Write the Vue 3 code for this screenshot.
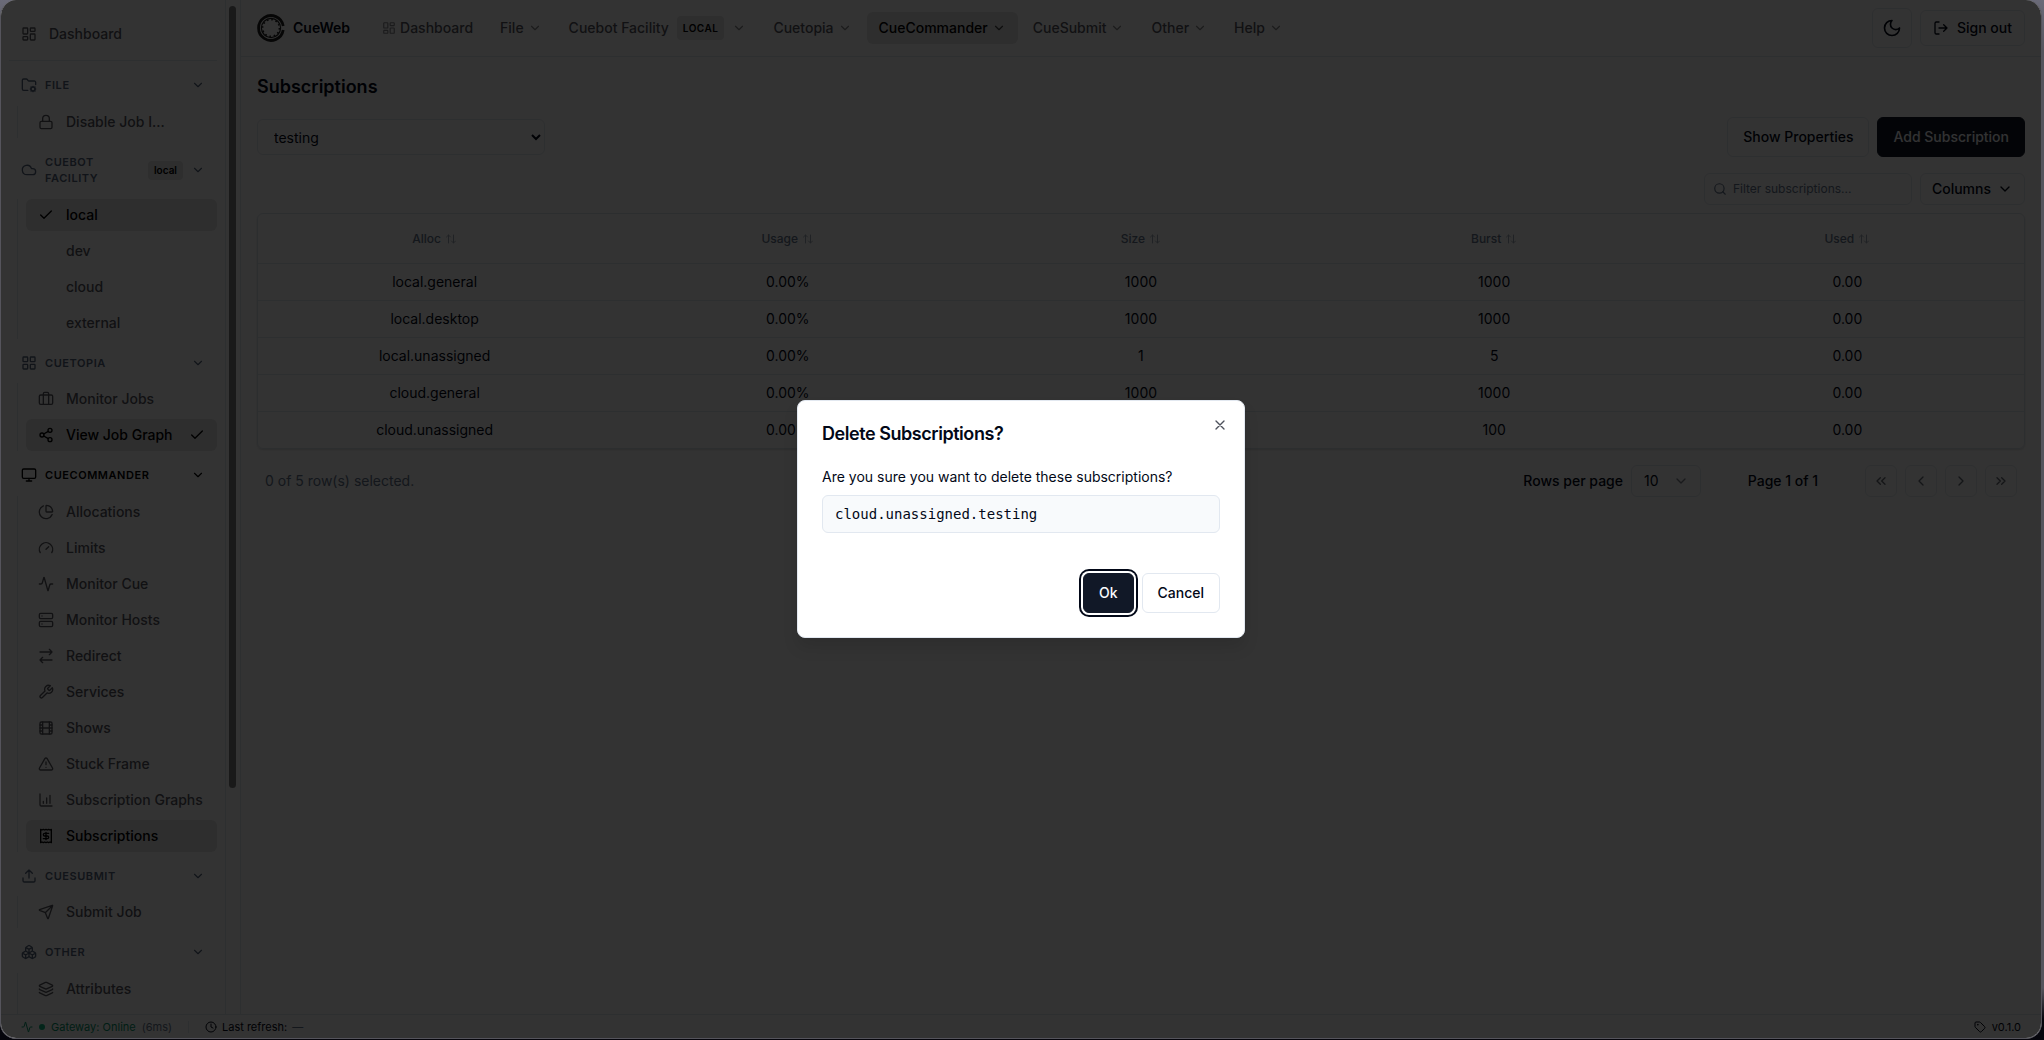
<script setup>
import { ref, computed, h } from "vue";

const icons = {
  dashboard: '<rect width="7" height="9" x="3" y="3" rx="1"/><rect width="7" height="5" x="14" y="3" rx="1"/><rect width="7" height="9" x="14" y="12" rx="1"/><rect width="7" height="5" x="3" y="16" rx="1"/>',
  grid: '<rect width="7" height="7" x="3" y="3" rx="1"/><rect width="7" height="7" x="14" y="3" rx="1"/><rect width="7" height="7" x="14" y="14" rx="1"/><rect width="7" height="7" x="3" y="14" rx="1"/>',
  folder: '<circle cx="18" cy="18" r="3"/><path d="M10.3 20H4a2 2 0 0 1-2-2V5a2 2 0 0 1 2-2h3.9a2 2 0 0 1 1.69.9l.81 1.2a2 2 0 0 0 1.67.9H20a2 2 0 0 1 2 2v3.3"/><path d="M18 14v1M18 21v1M22 18h-1M15 18h-1M21 15l-.9.9M15.9 20.1l-.9.9M21 21l-.9-.9M15.9 15.9 15 15"/>',
  lock: '<rect width="18" height="11" x="3" y="11" rx="2"/><path d="M7 11V7a5 5 0 0 1 10 0v4"/>',
  cloud: '<path d="M17.5 19H9a7 7 0 1 1 6.71-9h1.79a4.5 4.5 0 1 1 0 9Z"/>',
  check: '<path d="M20 6 9 17l-5-5"/>',
  briefcase: '<path d="M16 20V4a2 2 0 0 0-2-2h-4a2 2 0 0 0-2 2v16"/><rect width="20" height="14" x="2" y="6" rx="2"/>',
  share: '<circle cx="18" cy="5" r="3"/><circle cx="6" cy="12" r="3"/><circle cx="18" cy="19" r="3"/><path d="m8.59 13.51 6.83 3.98M15.41 6.51l-6.82 3.98"/>',
  monitor: '<rect width="20" height="14" x="2" y="3" rx="2"/><path d="M8 21h8M12 17v4"/>',
  pie: '<path d="M21 12c.552 0 1.005-.449.95-.998a10 10 0 0 0-8.953-8.951c-.55-.055-.998.398-.998.95v8a1 1 0 0 0 1 1z"/><path d="M21.21 15.89A10 10 0 1 1 8 2.83"/>',
  gauge: '<path d="m12 14 4-4"/><path d="M3.34 19a10 10 0 1 1 17.32 0"/>',
  activity: '<path d="M22 12h-2.48a2 2 0 0 0-1.93 1.46l-2.35 8.36a.25.25 0 0 1-.48 0L9.24 2.18a.25.25 0 0 0-.48 0l-2.35 8.36A2 2 0 0 1 4.49 12H2"/>',
  server: '<rect width="20" height="8" x="2" y="2" rx="2"/><rect width="20" height="8" x="2" y="14" rx="2"/><path d="M6 6h.01M6 18h.01"/>',
  redirect: '<path d="m17 2 4 4-4 4M3 6h18M7 22l-4-4 4-4M21 18H3"/>',
  wrench: '<path d="M14.7 6.3a1 1 0 0 0 0 1.4l1.6 1.6a1 1 0 0 0 1.4 0l3.77-3.77a6 6 0 0 1-7.94 7.94l-6.91 6.91a2.12 2.12 0 0 1-3-3l6.91-6.91a6 6 0 0 1 7.94-7.94l-3.76 3.76z"/>',
  film: '<rect width="18" height="18" x="3" y="3" rx="2"/><path d="M7 3v18M3 7.5h4M3 12h18M3 16.5h4M17 3v18M17 7.5h4M17 16.5h4"/>',
  alert: '<path d="m21.73 18-8-14a2 2 0 0 0-3.48 0l-8 14A2 2 0 0 0 4 21h16a2 2 0 0 0 1.73-3M12 9v4M12 17h.01"/>',
  chart: '<path d="M3 3v16a2 2 0 0 0 2 2h16M13 17V9M18 17V5M8 17v-3"/>',
  receipt: '<path d="M4 2v20l2-1 2 1 2-1 2 1 2-1 2 1 2-1 2 1V2l-2 1-2-1-2 1-2-1-2 1-2-1-2 1Z"/><path d="M16 8h-6a2 2 0 1 0 0 4h4a2 2 0 1 1 0 4H8M12 17.5v-11"/>',
  upload: '<path d="M12 3v12M17 8l-5-5-5 5M21 15v4a2 2 0 0 1-2 2H5a2 2 0 0 1-2-2v-4"/>',
  send: '<path d="M14.536 21.686a.5.5 0 0 0 .937-.024l6.5-19a.496.496 0 0 0-.635-.635l-19 6.5a.5.5 0 0 0-.024.937l7.93 3.18a2 2 0 0 1 1.112 1.11zM21.854 2.147l-10.94 10.939"/>',
  boxes: '<path d="M2.97 12.92A2 2 0 0 0 2 14.63v3.24a2 2 0 0 0 .97 1.71l3 1.8a2 2 0 0 0 2.06 0L12 19v-5.5l-5-3-4.03 2.42ZM7 16.5l-4.74-2.85M7 16.5l5-3M7 16.5v5.17M12 13.5V19l3.97 2.38a2 2 0 0 0 2.06 0l3-1.8a2 2 0 0 0 .97-1.71v-3.24a2 2 0 0 0-.97-1.71L17 10.5l-5 3ZM17 16.5l-5-3M17 16.5l4.74-2.85M17 16.5v5.17M7.97 4.42A2 2 0 0 0 7 6.13v4.37l5 3 5-3V6.13a2 2 0 0 0-.97-1.71l-3-1.8a2 2 0 0 0-2.06 0l-3 1.8ZM12 8 7.26 5.15M12 8l4.74-2.85M12 13.5V8"/>',
  layers: '<path d="M12.83 2.18a2 2 0 0 0-1.66 0L2.6 6.08a1 1 0 0 0 0 1.83l8.58 3.91a2 2 0 0 0 1.66 0l8.58-3.9a1 1 0 0 0 0-1.83zM2 12a1 1 0 0 0 .58.91l8.6 3.91a2 2 0 0 0 1.65 0l8.58-3.9A1 1 0 0 0 22 12M2 17a1 1 0 0 0 .58.91l8.6 3.91a2 2 0 0 0 1.65 0l8.58-3.9A1 1 0 0 0 22 17"/>',
  down: '<path d="m6 9 6 6 6-6"/>',
  left: '<path d="m15 18-6-6 6-6"/>',
  right: '<path d="m9 18 6-6-6-6"/>',
  first: '<path d="m11 17-5-5 5-5M18 17l-5-5 5-5"/>',
  last: '<path d="m6 17 5-5-5-5M13 17l5-5-5-5"/>',
  moon: '<path d="M12 3a6 6 0 0 0 9 9 9 9 0 1 1-9-9Z"/>',
  logout: '<path d="M9 21H5a2 2 0 0 1-2-2V5a2 2 0 0 1 2-2h4M16 17l5-5-5-5M21 12H9"/>',
  search: '<circle cx="11" cy="11" r="8"/><path d="m21 21-4.3-4.3"/>',
  sort: '<path d="m3 8 4-4 4 4M7 4v16M21 16l-4 4-4-4M17 20V4"/>',
  clock: '<circle cx="12" cy="12" r="10"/><path d="M12 6v6l4 2"/>',
  tag: '<path d="M12.586 2.586A2 2 0 0 0 11.172 2H4a2 2 0 0 0-2 2v7.172a2 2 0 0 0 .586 1.414l8.704 8.704a2.426 2.426 0 0 0 3.42 0l6.58-6.58a2.426 2.426 0 0 0 0-3.42z"/><circle cx="7.5" cy="7.5" r=".5" fill="currentColor"/>',
  close: '<path d="M18 6 6 18M6 6l12 12"/>',
};

const Icon = (props) =>
  h("svg", {
    width: props.size || 16,
    height: props.size || 16,
    viewBox: "0 0 24 24",
    fill: "none",
    stroke: "currentColor",
    "stroke-width": 2,
    "stroke-linecap": "round",
    "stroke-linejoin": "round",
    "aria-hidden": "true",
    class: "icon",
    innerHTML: icons[props.name],
  });
Icon.props = ["name", "size"];

const groups = ref([
  { title: "File", icon: "folder", items: [{ label: "Disable Job I...", icon: "lock" }] },
  {
    title: "Cuebot Facility",
    icon: "cloud",
    badge: "local",
    items: [{ label: "local", icon: "check", active: true }, { label: "dev" }, { label: "cloud" }, { label: "external" }],
  },
  {
    title: "Cuetopia",
    icon: "grid",
    items: [
      { label: "Monitor Jobs", icon: "briefcase" },
      { label: "View Job Graph", icon: "share", active: true, checked: true },
    ],
  },
  {
    title: "CueCommander",
    icon: "monitor",
    current: true,
    items: [
      { label: "Allocations", icon: "pie" },
      { label: "Limits", icon: "gauge" },
      { label: "Monitor Cue", icon: "activity" },
      { label: "Monitor Hosts", icon: "server" },
      { label: "Redirect", icon: "redirect" },
      { label: "Services", icon: "wrench" },
      { label: "Shows", icon: "film" },
      { label: "Stuck Frame", icon: "alert" },
      { label: "Subscription Graphs", icon: "chart" },
      { label: "Subscriptions", icon: "receipt", active: true },
    ],
  },
  { title: "CueSubmit", icon: "upload", items: [{ label: "Submit Job", icon: "send" }] },
  { title: "Other", icon: "boxes", items: [{ label: "Attributes", icon: "layers" }] },
]);

const menus = [
  { label: "File" },
  { label: "Cuebot Facility", badge: "LOCAL" },
  { label: "Cuetopia" },
  { label: "CueCommander", active: true },
  { label: "CueSubmit" },
  { label: "Other" },
  { label: "Help" },
];

const columns = ["Alloc", "Usage", "Size", "Burst", "Used"];
const rows = [
  ["local.general", "0.00%", "1000", "1000", "0.00"],
  ["local.desktop", "0.00%", "1000", "1000", "0.00"],
  ["local.unassigned", "0.00%", "1", "5", "0.00"],
  ["cloud.general", "0.00%", "1000", "1000", "0.00"],
  ["cloud.unassigned", "0.00%", "100", "100", "0.00"],
];

const show = ref("testing");
const pageSize = ref("10");
const filter = ref("");
const dialogOpen = ref(true);

const visibleRows = computed(() => rows.filter((r) => r[0].includes(filter.value)));

const closeDialog = () => {
  dialogOpen.value = false;
};
</script>

<template>
  <div class="desktop">
    <div class="window">
      <div class="body">
        <aside class="sidebar">
          <nav class="side-nav">
            <a href="#" class="side-link home"><Icon name="dashboard" /><span>Dashboard</span></a>
            <section v-for="g in groups" :key="g.title" class="group">
              <button class="group-head" :class="{ current: g.current }">
                <Icon :name="g.icon" />
                <span class="group-title">{{ g.title }}</span>
                <span v-if="g.badge" class="side-badge">{{ g.badge }}</span>
                <Icon name="down" :size="14" />
              </button>
              <div class="group-items">
                <a v-for="item in g.items" :key="item.label" href="#" class="side-link" :class="{ active: item.active }">
                  <Icon :name="item.icon" />
                  <span class="side-label">{{ item.label }}</span>
                  <Icon v-if="item.checked" name="check" />
                </a>
              </div>
            </section>
          </nav>
          <div class="scroll-track"><div class="scroll-thumb"></div></div>
        </aside>

        <div class="content">
          <header class="topbar">
            <a href="#" class="brand">
              <svg class="logo" width="28" height="28" viewBox="0 0 28 28" fill="none" stroke="currentColor" aria-hidden="true">
                <path d="M26.200 12A12.400 12.400 0 1 0 26.200 16" stroke-width="2.800" />
                <circle cx="14" cy="14" r="9.600" stroke-width="1.200" />
                <circle cx="14" cy="14" r="8.400" stroke-width="1.600" stroke-dasharray="1.600 2.798" />
              </svg>
              <span>CueWeb</span>
            </a>
            <nav class="menus">
              <a href="#" class="menu"><Icon name="dashboard" :size="14" />Dashboard</a>
              <button v-for="m in menus" :key="m.label" class="menu" :class="{ active: m.active, wide: m.badge }">
                {{ m.label }}
                <span v-if="m.badge" class="menu-badge">{{ m.badge }}</span>
                <Icon name="down" :size="14" />
              </button>
            </nav>
            <div class="top-actions">
              <button class="btn square" aria-label="Toggle theme"><Icon name="moon" :size="20" /></button>
              <button class="btn signout"><Icon name="logout" />Sign out</button>
            </div>
          </header>

          <main class="main">
            <h1>Subscriptions</h1>
            <div class="toolbar">
              <select v-model="show" class="show-select" aria-label="Show">
                <option>testing</option>
              </select>
              <div class="buttons">
                <button class="btn">Show Properties</button>
                <button class="btn primary">Add Subscription</button>
              </div>
            </div>
            <div class="filters">
              <label class="filter">
                <Icon name="search" :size="14" />
                <input v-model="filter" type="text" placeholder="Filter subscriptions..." aria-label="Filter subscriptions" />
              </label>
              <button class="btn columns">Columns<Icon name="down" /></button>
            </div>

            <div class="table-box">
              <table>
                <thead>
                  <tr>
                    <th v-for="c in columns" :key="c">
                      <button class="sort">{{ c }}<Icon name="sort" :size="12" /></button>
                    </th>
                  </tr>
                </thead>
                <tbody>
                  <tr v-for="row in visibleRows" :key="row[0]">
                    <td v-for="(cell, i) in row" :key="i">{{ cell }}</td>
                  </tr>
                </tbody>
              </table>
            </div>

            <div class="pager">
              <p class="selected">0 of 5 row(s) selected.</p>
              <div class="page-size">
                <label for="page-size">Rows per page</label>
                <div class="select-wrap">
                  <select id="page-size" v-model="pageSize">
                    <option>10</option>
                    <option>20</option>
                    <option>50</option>
                  </select>
                  <Icon name="down" />
                </div>
              </div>
              <span class="page-count">Page 1 of 1</span>
              <div class="page-buttons">
                <button disabled aria-label="First page"><Icon name="first" /></button>
                <button disabled aria-label="Previous page"><Icon name="left" /></button>
                <button disabled aria-label="Next page"><Icon name="right" /></button>
                <button disabled aria-label="Last page"><Icon name="last" /></button>
              </div>
            </div>
          </main>
        </div>
      </div>

      <footer class="status">
        <span class="gateway"><Icon name="activity" :size="12" /><i class="dot"></i>Gateway: Online</span>
        <span class="latency">(6ms)</span>
        <span class="divider"></span>
        <span class="refresh"><Icon name="clock" :size="12" />Last refresh: <span class="dash">—</span></span>
        <span class="version"><Icon name="tag" :size="12" />v0.1.0</span>
      </footer>

      <div v-if="dialogOpen" class="overlay">
        <div class="dialog" role="dialog" aria-modal="true" aria-labelledby="dialog-title">
          <h2 id="dialog-title">Delete Subscriptions?</h2>
          <p>Are you sure you want to delete these subscriptions?</p>
          <div class="names">cloud.unassigned.testing</div>
          <div class="dialog-actions">
            <button class="btn primary focused" @click="closeDialog">Ok</button>
            <button class="btn" @click="closeDialog">Cancel</button>
          </div>
          <button class="close" aria-label="Close" @click="closeDialog"><Icon name="close" /></button>
        </div>
      </div>
    </div>
  </div>
</template>

<style>
body {
  background: #08080f;
}
</style>

<style scoped>
* {
  box-sizing: border-box;
}

.desktop {
  height: 100vh;
  padding: 0 2px 1px 0;
  background: linear-gradient(to bottom, #6a6a78, #55545c 5%, #55545c 95%, #05050c 98%);
  font-family: Inter, "Liberation Sans", sans-serif;
  font-size: 14px;
  line-height: 20px;
  color: #020817;
}

.window {
  position: relative;
  display: flex;
  flex-direction: column;
  height: 100%;
  overflow: hidden;
  background: #ffffff;
  border: 1px solid #55545c;
  border-top: 0;
  border-radius: 16px;
}

.icon {
  flex-shrink: 0;
  display: block;
}

button,
input,
select {
  font: inherit;
  color: inherit;
}

button {
  background: none;
  border: none;
  padding: 0;
  cursor: pointer;
}

a {
  color: inherit;
  text-decoration: none;
}

.body {
  flex: 1;
  display: flex;
  min-height: 0;
}

/* sidebar */
.sidebar {
  display: flex;
  width: 240px;
  flex-shrink: 0;
  overflow: hidden;
  border-right: 1px solid #e2e8f0;
}

.side-nav {
  flex: 1;
  min-width: 0;
  padding: 16px 8px 0;
  border-right: 1px solid #e2e8f0;
}

.side-link {
  display: flex;
  align-items: center;
  gap: 12px;
  height: 32px;
  padding: 0 12px;
  border-radius: 6px;
  font-weight: 500;
  color: #58585e;
}

.side-link.active {
  background: #e5e5e5;
  color: #000000;
}

.home {
  height: 36px;
}

.home + .group {
  margin-top: 8px;
  border-top: 1px solid #e2e8f0;
}

.side-label {
  flex: 1;
  overflow: hidden;
  text-overflow: ellipsis;
  white-space: nowrap;
}

.group {
  padding-top: 8px;
}

.group-head {
  display: flex;
  align-items: center;
  gap: 8px;
  width: 100%;
  padding: 8px 12px;
  font-size: 11px;
  font-weight: 600;
  line-height: 1.5;
  letter-spacing: 0.05em;
  text-transform: uppercase;
  text-align: left;
  color: #56657c;
}

.group-head.current {
  color: #000000;
}

.group-title {
  flex: 1;
}

.side-badge {
  padding: 2px 6px;
  border-radius: 4px;
  background: #e5e5e5;
  font-size: 10px;
  letter-spacing: 0;
  text-transform: none;
  color: #000000;
}

.group-items {
  display: flex;
  flex-direction: column;
  gap: 4px;
  margin: 4px 0 0 8px;
  padding-left: 8px;
  border-left: 1px solid #e2e8f0;
}

.group:last-child .group-items {
  padding-bottom: 40px;
}

.scroll-track {
  width: 14px;
  padding: 6px 4px 6px 3px;
}

.scroll-thumb {
  height: 78%;
  border-radius: 4px;
  background: #7f7f7f;
}

/* top bar */
.content {
  flex: 1;
  min-width: 0;
}

.topbar {
  display: flex;
  align-items: center;
  gap: 20px;
  height: 57px;
  padding: 0 16px;
  border-bottom: 1px solid #e2e8f0;
}

.brand {
  display: flex;
  align-items: center;
  gap: 8px;
  font-weight: 600;
}

.logo {
  color: #222222;
}

.menus {
  display: flex;
  align-items: center;
  gap: 3px;
}

.menu {
  display: flex;
  align-items: center;
  gap: 4px;
  height: 32px;
  padding: 0 12px;
  border-radius: 6px;
  font-weight: 500;
  color: #58585e;
}

.menu .icon {
  opacity: 0.7;
}

.menu.wide {
  gap: 8px;
}

.menu.active {
  background: #e5e5e5;
  color: #000000;
}

.menu-badge {
  padding: 2px 6px;
  border-radius: 4px;
  background: #e5e5e5;
  font-size: 10px;
  font-weight: 600;
  letter-spacing: 0.05em;
  color: #000000;
}

.top-actions {
  display: flex;
  align-items: center;
  gap: 8px;
  margin-left: auto;
}

.btn {
  display: inline-flex;
  align-items: center;
  justify-content: center;
  gap: 8px;
  height: 40px;
  padding: 0 15px;
  border: 1px solid #e2e8f0;
  border-radius: 6px;
  background: #ffffff;
  font-weight: 500;
}

.btn.primary {
  border-color: #111827;
  background: #111827;
  color: #f8fafc;
}

.btn.square {
  width: 40px;
  padding: 0;
}

.btn.signout {
  height: 36px;
  padding: 0 12px;
}

/* page */
.main {
  padding: 16px;
}

h1 {
  margin: 0;
  font-size: 18px;
  font-weight: 600;
  line-height: 28px;
}

.toolbar {
  display: flex;
  align-items: center;
  justify-content: space-between;
  margin-top: 16px;
}

.show-select {
  width: 288px;
  height: 36px;
  padding: 0 12px;
  border: 1px solid #e2e8f0;
  border-radius: 6px;
  background: #ffffff;
}

.buttons {
  display: flex;
  gap: 8px;
}

.filters {
  display: flex;
  justify-content: flex-end;
  gap: 8px;
  margin-top: 16px;
}

.filter {
  display: flex;
  align-items: center;
  gap: 6px;
  width: 208px;
  height: 32px;
  padding: 0 8px;
  border: 1px solid #e2e8f0;
  border-radius: 6px;
  font-size: 12px;
  color: #64748b;
}

.filter input {
  flex: 1;
  min-width: 0;
  padding: 0;
  border: none;
  outline: none;
  background: none;
}

.filter input::placeholder {
  color: #64748b;
}

.btn.columns {
  height: 32px;
  padding: 0 11px;
  gap: 6px;
}

.table-box {
  margin-top: 8px;
  border: 1px solid #dde3ec;
  border-radius: 6px;
  box-shadow: 0 1px 2px rgba(0, 0, 0, 0.15);
}

table {
  width: 100%;
  table-layout: fixed;
  border-collapse: collapse;
}

th {
  height: 49px;
  padding: 0;
  font-weight: 500;
}

.sort {
  display: inline-flex;
  align-items: center;
  gap: 4px;
  font-size: 12px;
  color: #64748b;
}

.sort .icon {
  opacity: 0.6;
}

td {
  padding: 8px;
  border-top: 1px solid #e2e8f0;
  text-align: center;
}

.pager {
  display: flex;
  align-items: center;
  gap: 32px;
  margin-top: 16px;
  padding: 0 8px;
  font-weight: 500;
}

.selected {
  flex: 1;
  margin: 0;
  font-weight: 400;
  color: #64748b;
}

.page-size {
  display: flex;
  align-items: center;
  gap: 8px;
}

.select-wrap {
  display: grid;
  align-items: center;
  width: 70px;
}

.select-wrap > * {
  grid-area: 1 / 1;
}

.select-wrap select {
  appearance: none;
  height: 32px;
  padding: 0 12px;
  border: 1px solid #e2e8f0;
  border-radius: 6px;
  background: #ffffff;
  font-weight: 400;
}

.select-wrap .icon {
  justify-self: end;
  margin-right: 12px;
  opacity: 0.5;
  pointer-events: none;
}

.page-count {
  width: 100px;
  text-align: center;
}

.page-buttons {
  display: flex;
  gap: 8px;
}

.page-buttons button {
  display: flex;
  align-items: center;
  justify-content: center;
  width: 32px;
  height: 32px;
  border: 1px solid #d5dce6;
  border-radius: 6px;
  color: #020817;
  opacity: 0.6;
}

/* status bar */
.status {
  display: flex;
  align-items: center;
  height: 24px;
  padding: 0 20px;
  border-top: 1px solid #e2e8f0;
  font-size: 11px;
  line-height: 16px;
}

.gateway,
.refresh,
.version {
  display: flex;
  align-items: center;
  gap: 6px;
}

.gateway {
  color: #059669;
}

.dot {
  width: 6px;
  height: 6px;
  border-radius: 50%;
  background: #10b981;
}

.latency {
  margin-left: 6px;
  color: #64748b;
}

.divider {
  width: 1px;
  height: 12px;
  margin: 0 16px;
  background: #e2e8f0;
}

.refresh {
  gap: 5px;
}

.dash {
  color: #64748b;
}

.version {
  margin-left: auto;
}

/* dialog */
.overlay {
  position: absolute;
  inset: 0;
  display: flex;
  align-items: center;
  justify-content: center;
  background: rgba(0, 0, 0, 0.8);
}

.dialog {
  position: relative;
  width: 448px;
  padding: 24px;
  border: 1px solid #e2e8f0;
  border-radius: 8px;
  background: #ffffff;
  box-shadow: 0 10px 15px rgba(0, 0, 0, 0.1);
}

.dialog h2 {
  margin: 0 0 24px;
  font-size: 18px;
  font-weight: 600;
  line-height: 18px;
  letter-spacing: -0.025em;
}

.dialog p {
  margin: 0 0 8px;
}

.names {
  padding: 8px 12px;
  border: 1px solid #e2e8f0;
  border-radius: 6px;
  background: #f8fafc;
  font-family: "DejaVu Sans Mono", monospace;
}

.dialog-actions {
  display: flex;
  justify-content: flex-end;
  gap: 8px;
  margin-top: 40px;
}

.focused {
  box-shadow: 0 0 0 2px #ffffff, 0 0 0 4px #020817;
}

.close {
  position: absolute;
  top: 16px;
  right: 16px;
  opacity: 0.7;
}
</style>
